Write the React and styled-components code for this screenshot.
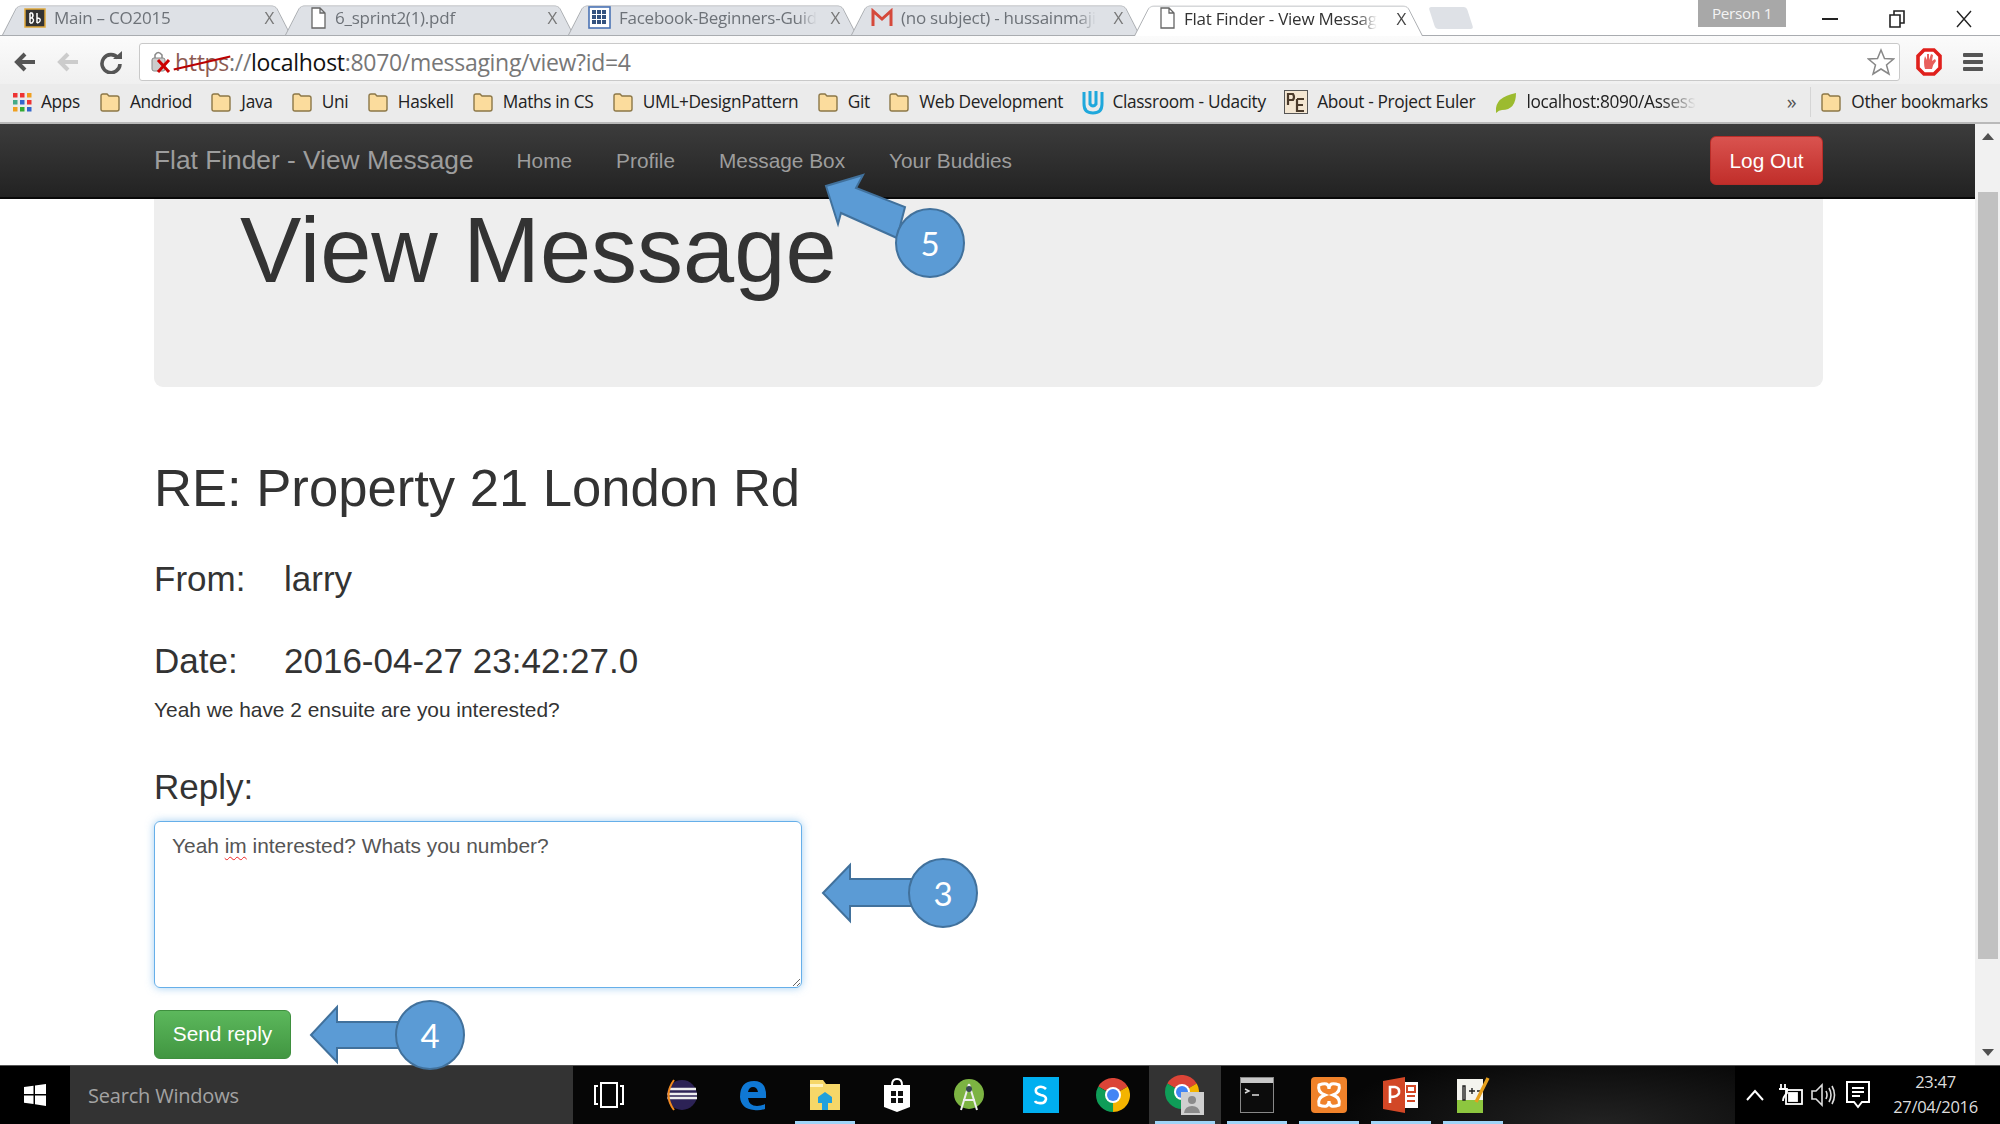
import React from 'react';
import styled, { createGlobalStyle } from 'styled-components';

const GlobalStyle = createGlobalStyle`
  html, body { margin: 0; padding: 0; background: #fff; }
  body { font-family: "Liberation Sans", Arial, sans-serif; overflow: hidden; }
  * { box-sizing: border-box; }
`;

const uiFont = '"Open Sans", "Noto Sans", sans-serif';

const Screen = styled.div`
  position: relative;
  width: 2000px;
  height: 1124px;
  display: flex;
  flex-direction: column;
  overflow: hidden;
`;

/* ---------- browser chrome ---------- */
const TabStrip = styled.div`
  height: 36px;
  flex: none;
  display: flex;
  align-items: stretch;
  padding-left: 5px;
  background: #fff;
  border-bottom: 1px solid #a9acb0;
`;
const Tab = styled.div`
  position: relative;
  width: 283px;
  height: ${p => (p.$active ? 36 : 35)}px;
  display: flex;
  align-items: center;
  gap: 8px;
  padding: 0 14px 0 ${p => p.$pad}px;
  z-index: ${p => (p.$active ? 2 : 1)};
  font: 17px ${uiFont};
  letter-spacing: -0.25px;
  color: ${p => (p.$active ? '#333' : '#6d7278')};
  &::before {
    content: "";
    position: absolute;
    inset: 1px -3px 0 -3px;
    z-index: -1;
    background: ${p => (p.$active ? '#fff' : '#dee1e6')};
    border: 1px solid #a9acb0;
    border-bottom: 0;
    border-radius: 5px 5px 0 0;
    transform: perspective(70px) rotateX(14deg);
    transform-origin: bottom;
  }
`;
const TabTitle = styled.span`
  white-space: nowrap;
  ${p => p.$fade && `
    -webkit-mask-image: linear-gradient(90deg, #000 90%, transparent);
    mask-image: linear-gradient(90deg, #000 90%, transparent);
  `}
`;
const TabClose = styled.span`
  margin-left: auto;
  flex: none;
  font: 17px ${uiFont};
  color: ${p => (p.$active ? '#444' : '#777')};
`;
const NewTab = styled.div`
  width: 38px;
  height: 22px;
  margin: 7px 0 0 12px;
  background: #dee1e6;
  border-radius: 3px;
  transform: skewX(18deg);
`;
const WindowArea = styled.div`
  margin-left: auto;
  display: flex;
  align-items: flex-start;
  padding-right: 3px;
`;
const PersonBadge = styled.div`
  width: 88px;
  height: 27px;
  margin-right: 10px;
  background: #a8a8a8;
  color: #f4f4f4;
  font: 15.3px/26px ${uiFont};
  letter-spacing: -0.3px;
  text-align: center;
`;
const WinButton = styled.div`
  width: 67px;
  height: 36px;
  display: flex;
  align-items: center;
  justify-content: center;
  margin-top: 1px;
`;
const Toolbar = styled.div`
  height: 48px;
  flex: none;
  display: flex;
  align-items: center;
  padding: 4px 12px 0 3px;
  background: linear-gradient(#fbfbfb, #f0f0f0);
`;
const NavIcon = styled.div`
  width: 43px;
  height: 30px;
  display: flex;
  align-items: center;
  justify-content: center;
`;
const AddressBar = styled.div`
  flex: 1;
  height: 38px;
  margin-left: 7px;
  display: flex;
  align-items: center;
  padding: 0 4px 0 9px;
  gap: 2px;
  background: #fff;
  border: 1px solid #c9c9c9;
  border-radius: 3px;
  font: 23px ${uiFont};
  letter-spacing: -0.3px;
  color: #777;
`;
const Url = styled.div`
  flex: 1;
  white-space: nowrap;
`;
const BadProtocol = styled.span`
  position: relative;
  color: #8c5a52;
  &::after {
    content: "";
    position: absolute;
    left: -2px;
    right: -2px;
    top: 50%;
    height: 2px;
    background: #b00;
    transform: rotate(-13deg);
  }
`;
const Host = styled.span`
  color: #111;
`;
const ToolButton = styled.div`
  width: ${p => p.$w}px;
  flex: none;
  display: flex;
  justify-content: center;
`;
const BookmarkBar = styled.div`
  height: 40px;
  flex: none;
  display: flex;
  align-items: center;
  padding: 0 12px 3px;
  background: #ebebeb;
  border-bottom: 2px solid #b9b9b9;
  font: 17.3px ${uiFont};
  letter-spacing: -0.35px;
  color: #222;
`;
const Bookmark = styled.div`
  display: flex;
  align-items: center;
  gap: ${p => p.$iconGap ?? 9}px;
  white-space: nowrap;
  margin-right: ${p => p.$gap ?? 18.4}px;
`;
const FadedMark = styled.span`
  -webkit-mask-image: linear-gradient(90deg, #000 80%, transparent);
  mask-image: linear-gradient(90deg, #000 80%, transparent);
`;
const Overflow = styled.div`
  margin-left: auto;
  padding-right: 14px;
  font-size: 20px;
  color: #555;
`;
const BarDivider = styled.div`
  width: 1px;
  height: 30px;
  margin-right: 9px;
  background: #d5d5d5;
`;

/* ---------- the page ---------- */
const Viewport = styled.div`
  flex: 1;
  min-height: 0;
  display: flex;
`;
const Page = styled.div`
  flex: 1;
  min-width: 0;
  overflow: hidden;
  background: #fff;
`;
const Navbar = styled.nav`
  height: 75px;
  display: flex;
  align-items: center;
  gap: 44px;
  padding: 0 152px 0 154px;
  background: linear-gradient(#3c3c3c, #222);
  border-bottom: 2px solid #080808;
  color: #9d9d9d;
  font-size: 20.8px;
`;
const Brand = styled.a`
  margin-right: -1px;
  font-size: 26.3px;
`;
const NavLink = styled.a``;
const LogOut = styled.button`
  margin-left: auto;
  width: 113px;
  height: 49px;
  padding: 0;
  border: 1px solid #b92c28;
  border-radius: 6px;
  background: linear-gradient(#d9534f, #c12e2a);
  color: #fff;
  font: 20.8px "Liberation Sans", Arial, sans-serif;
`;
const Container = styled.main`
  padding: 0 152px 0 154px;
  color: #333;
`;
const Jumbotron = styled.section`
  height: 188px;
  padding: 1px 86px 0;
  background: #eee;
  border-radius: 0 0 9px 9px;
`;
const PageTitle = styled.h1`
  margin: 0;
  font-size: 92px;
  font-weight: 400;
  line-height: 1.1;
`;
const Subject = styled.h2`
  margin: 72px 0 0;
  font-size: 52.6px;
  font-weight: 400;
  line-height: 58px;
`;
const MetaRow = styled.h3`
  display: flex;
  margin: ${p => p.$top}px 0 0;
  font-size: 35px;
  font-weight: 400;
  line-height: 38.5px;
`;
const MetaLabel = styled.span`
  width: 130px;
`;
const Body = styled.p`
  margin: 15px 0 0;
  font-size: 20.9px;
  line-height: 29px;
`;
const ReplyBox = styled.div`
  width: 648px;
  height: 167px;
  margin-top: 14px;
  padding: 9px 17px;
  border: 1.5px solid #66afe9;
  border-radius: 6px;
  box-shadow: 0 0 8px rgba(102, 175, 233, .6);
  color: #555;
  font-size: 20.9px;
  line-height: 29px;
  overflow: auto;
  resize: both;
`;
const Misspelt = styled.span`
  text-decoration: underline wavy #e22;
  text-decoration-thickness: 1px;
  text-underline-offset: 3px;
`;
const SendButton = styled.button`
  display: block;
  width: 137px;
  height: 49px;
  margin-top: 22px;
  padding: 0;
  border: 1px solid #3e8f3e;
  border-radius: 6px;
  background: linear-gradient(#5cb85c, #419641);
  color: #fff;
  font: 20.8px "Liberation Sans", Arial, sans-serif;
`;
const Scrollbar = styled.div`
  width: 25px;
  flex: none;
  display: flex;
  flex-direction: column;
  align-items: center;
  background: #f1f1f1;
`;
const ScrollArrow = styled.div`
  height: 25px;
  flex: none;
  display: flex;
  align-items: center;
`;
const ScrollThumb = styled.div`
  width: 20px;
  height: 767px;
  margin-top: 43px;
  background: #c1c1c1;
`;
const ScrollArrowEnd = styled(ScrollArrow)`
  margin-top: auto;
`;

/* ---------- taskbar ---------- */
const Taskbar = styled.footer`
  height: 59px;
  flex: none;
  display: flex;
  align-items: stretch;
  background: radial-gradient(ellipse 300px 90px at 1600px 60px, #232323, #060606 90%);
  border-top: 1px solid #555;
`;
const StartButton = styled.div`
  width: 70px;
  flex: none;
  display: flex;
  align-items: center;
  justify-content: center;
  background: #000;
`;
const SearchBox = styled.div`
  width: 503px;
  flex: none;
  display: flex;
  align-items: center;
  padding-left: 18px;
  background: #333;
  color: #a3a3a3;
  font: 20px ${uiFont};
  letter-spacing: -0.2px;
`;
const TaskSlot = styled.div`
  position: relative;
  width: 72px;
  display: flex;
  align-items: center;
  justify-content: center;
  background: ${p => (p.$focus ? '#333' : 'transparent')};
  &::after {
    content: "";
    display: ${p => (p.$running ? 'block' : 'none')};
    position: absolute;
    left: 6px;
    right: 6px;
    bottom: 0;
    height: 3px;
    background: #9fd4f7;
  }
`;
const Tray = styled.div`
  margin-left: auto;
  display: flex;
  align-items: center;
  gap: 8px;
  padding: 0 8px 0 10px;
  background: #000;
`;
const ChevronWrap = styled.div`
  display: flex;
  margin-right: 4px;
`;
const Clock = styled.div`
  width: 113px;
  padding-bottom: 3px;
  text-align: center;
  color: #ddd;
  font: 16.5px/25px ${uiFont};
  letter-spacing: -0.3px;
`;

/* callouts lie over the page */
const Overlay = styled.svg`
  position: absolute;
  inset: 0;
  pointer-events: none;
`;
const CalloutNumber = styled.text`
  font: 33px Lato, "Open Sans", sans-serif;
  fill: #fff;
  text-anchor: middle;
  dominant-baseline: central;
`;

/* ---------- icons ---------- */
const Folder = () => (
  <svg width="22" height="22" viewBox="0 0 22 22">
    <path d="M2 5 Q2 3 4 3 H8 L10 5 H18 Q20 5 20 7 V18 Q20 20 18 20 H4 Q2 20 2 18 Z" fill="#fbdc9d" stroke="#8c7747" strokeWidth="1.4" />
  </svg>
);
const PageIcon = () => (
  <svg width="18" height="22" viewBox="0 0 18 22" fill="#fff" stroke="#666" strokeWidth="1.3">
    <path d="M3 1 H11 L16 6 V21 H3 Z M11 1 V6 H16" />
  </svg>
);
const BbIcon = () => (
  <svg width="22" height="20" viewBox="0 0 22 20">
    <rect x="1" y="1" width="20" height="18" fill="#333" stroke="#e0a83a" strokeWidth="1.5" />
    <path d="M6 5 V15 M6 5 H8 Q10 7 8 10 H6 M8 10 Q11 12 8 15 H6 M13 5 V15 M13 10 Q17 10 16 13 Q15 15 13 15" fill="none" stroke="#fff" strokeWidth="1.5" />
  </svg>
);
const SheetIcon = () => (
  <svg width="23" height="23" viewBox="0 0 23 23">
    <rect x="1" y="1" width="21" height="21" fill="#fff" stroke="#4a73b5" strokeWidth="1.6" />
    {[4, 9, 14].map(x => [4, 9, 14].map(y => <rect key={`${x}${y}`} x={x} y={y} width="4" height="4" fill="#33527f" />))}
  </svg>
);
const GmailIcon = () => (
  <svg width="22" height="20" viewBox="0 0 22 20">
    <path d="M2 18 V3 L11 11 L20 3 V18" fill="none" stroke="#d5493b" strokeWidth="3" />
  </svg>
);
const Back = ({ color }) => (
  <svg width="24" height="22" viewBox="0 0 24 22">
    <path d="M22 11 H6 M12 3 L4 11 L12 19" fill="none" stroke={color} strokeWidth="4" />
  </svg>
);
const Reload = () => (
  <svg width="24" height="24" viewBox="0 0 24 24">
    <path d="M19 8 A9 9 0 1 0 21 14" fill="none" stroke="#555" strokeWidth="3.6" />
    <path d="M14 9 H23 V1 Z" fill="#555" />
  </svg>
);
const BrokenLock = () => (
  <svg width="24" height="26" viewBox="0 0 24 26">
    <rect x="3" y="9" width="13" height="13" rx="2" fill="#ccc" stroke="#888" />
    <path d="M6 9 V6 Q9 1 13 6 V9" fill="none" stroke="#888" strokeWidth="1.5" />
    <path d="M9 11 L20 23 M20 11 L9 23" stroke="#c00" strokeWidth="3" />
  </svg>
);
const Star = () => (
  <svg width="28" height="28" viewBox="0 0 28 28">
    <path d="M14 2 L17.5 10.5 L26.5 11 L19.5 17 L22 26 L14 21 L6 26 L8.5 17 L1.5 11 L10.5 10.5 Z" fill="#fff" stroke="#888" strokeWidth="1.5" />
  </svg>
);
const StopHand = () => (
  <svg width="26" height="28" viewBox="0 0 26 28">
    <path d="M8 2 H18 L24 8 V20 L18 26 H8 L2 20 V8 Z" fill="#fff" stroke="#e0201c" strokeWidth="3.6" />
    <path d="M9 21 Q7 14 9 8 L11 12 V6 H13 V12 L15 6 L17 7 L16 13 L19 11 L20 13 Q17 16 16 21 Z" fill="#e8605c" />
  </svg>
);
const Burger = () => (
  <svg width="20" height="20" viewBox="0 0 20 20" fill="#555">
    <rect y="1" width="20" height="4" rx="1" /><rect y="8" width="20" height="4" rx="1" /><rect y="15" width="20" height="4" rx="1" />
  </svg>
);
const AppsGrid = () => (
  <svg width="20" height="20" viewBox="0 0 20 20">
    {['#e33', '#e33', '#f0a020', '#4a8', '#36c', '#e33', '#f0a020', '#3a3', '#36c'].map((c, i) => (
      <rect key={i} x={1 + (i % 3) * 7} y={1 + Math.floor(i / 3) * 7} width="4.5" height="4.5" fill={c} />
    ))}
  </svg>
);
const UdacityIcon = () => (
  <svg width="24" height="28" viewBox="0 0 24 28">
    <path d="M3 4 V16 Q3 25 12 25 Q21 25 21 16 V4 M9 3 V16 Q12 20 15 16 V3" fill="none" stroke="#1fa8dc" strokeWidth="3" />
  </svg>
);
const EulerIcon = () => (
  <svg width="24" height="24" viewBox="0 0 24 24">
    <rect x=".5" y=".5" width="23" height="23" fill="#f3e6d2" stroke="#555" />
    <path d="M4 15 V4 H9 Q11 7 9 10 H4 M13 9 H20 M13 9 V21 H20 M13 15 H19" fill="none" stroke="#4a3a2a" strokeWidth="2.2" />
  </svg>
);
const LeafIcon = () => (
  <svg width="24" height="24" viewBox="0 0 24 24">
    <path d="M2 21 Q1 7 22 3 Q22 20 8 20 Q5 20 2 23 Z" fill="#9cbb2f" />
  </svg>
);
const WinLogo = () => (
  <svg width="24" height="24" viewBox="0 0 24 24" fill="#fff">
    <path d="M1 4 L10.5 2.7 V11 H1 Z M12 2.4 L23 1 V11 H12 Z M1 12.5 H10.5 V21 L1 19.8 Z M12 12.5 H23 V23 L12 21.3 Z" />
  </svg>
);
const TaskView = () => (
  <svg width="30" height="26" viewBox="0 0 30 26" fill="none" stroke="#fff" strokeWidth="2">
    <rect x="7" y="1" width="16" height="24" /><path d="M4 4 H1 V22 H4 M26 4 H29 V22 H26" />
  </svg>
);
const Eclipse = () => (
  <svg width="34" height="34" viewBox="0 0 34 34">
    <circle cx="18" cy="17" r="15" fill="#2c2255" />
    <path d="M5 11 H32 M3.5 16 H33 M3.5 20 H33" stroke="#eee" strokeWidth="2.5" />
    <path d="M10 2 Q-1 17 10 32" fill="none" stroke="#f28a1e" strokeWidth="2" />
  </svg>
);
const Edge = () => (
  <svg width="32" height="34" viewBox="0 0 32 34">
    <path d="M3 19 Q3 3 17 3 Q30 3 29 20 H11 Q12 28 20 28 Q25 28 28 26 V31 Q22 33 17 32 Q4 31 3 19 Z M11 14 H21 Q20 9 16 9 Q12 9 11 14 Z" fill="#0f78d4" fillRule="evenodd" />
  </svg>
);
const FilesIcon = () => (
  <svg width="32" height="34" viewBox="0 0 32 34">
    <path d="M1 2 H14 L17 6 H31 V32 H1 Z" fill="#f6d768" />
    <path d="M1 6 H14 V9 H1 Z" fill="#fff3c0" />
    <path d="M9 25 V19 L16 14 L23 19 V25 H19 V32 H13 V25 Z" fill="#21a0dc" />
  </svg>
);
const StoreIcon = () => (
  <svg width="30" height="36" viewBox="0 0 30 36">
    <path d="M10 8 Q10 2 15 2 Q20 2 20 8" fill="none" stroke="#fff" strokeWidth="2" />
    <path d="M2 8 H28 V30 L15 35 L2 30 Z" fill="#fff" />
    <path d="M9 14 H14 V19 H9 Z M16 14 H21 V19 H16 Z M9 21 H14 V26 H9 Z M16 21 H21 V26 H16 Z" fill="#111" />
  </svg>
);
const AndroidIcon = () => (
  <svg width="30" height="34" viewBox="0 0 30 34">
    <circle cx="15" cy="16" r="15" fill="#7cb342" />
    <path d="M15 6 L7 32 M15 6 L23 32 M9 22 H21" stroke="#eee" strokeWidth="2" fill="none" />
    <circle cx="15" cy="11" r="3" fill="#37474f" />
  </svg>
);
const SkypeIcon = () => (
  <svg width="36" height="36" viewBox="0 0 36 36">
    <rect width="36" height="36" fill="#00aff0" />
    <path d="M23 12 Q20 9 16 10 Q12 11 13 15 Q14 17 18 18 Q23 19 23 22 Q22 27 16 26 Q13 26 12 24" fill="none" stroke="#fff" strokeWidth="2.6" />
  </svg>
);
const ChromeLogo = ({ size = 34 }) => (
  <svg width={size} height={size} viewBox="0 0 34 34">
    {[['#db4437', -150], ['#f4b400', -30], ['#0f9d58', 90]].map(([c, r]) => (
      <circle key={c} cx="17" cy="17" r="12" fill="none" stroke={c} strokeWidth="10" pathLength="3" strokeDasharray="1 2" transform={`rotate(${r} 17 17)`} />
    ))}
    <circle cx="17" cy="17" r="8" fill="#fff" />
    <circle cx="17" cy="17" r="6" fill="#4285f4" />
  </svg>
);
const ChromeProfile = () => (
  <svg width="40" height="40" viewBox="0 0 40 40">
    <foreignObject width="34" height="34"><ChromeLogo /></foreignObject>
    <rect x="16" y="17" width="23" height="23" fill="#cfcfcf" />
    <circle cx="27" cy="25" r="4" fill="#8a8a8a" />
    <path d="M19 38 Q20 31 27 31 Q34 31 35 38 Z" fill="#8a8a8a" />
  </svg>
);
const Terminal = () => (
  <svg width="34" height="36" viewBox="0 0 34 36">
    <rect x=".5" y=".5" width="33" height="35" fill="#0c0c0c" stroke="#888" />
    <rect x="1" y="1" width="32" height="5" fill="#c8c8c8" />
    <path d="M5 12 L9 14 L5 16 M12 18 H19" stroke="#ddd" strokeWidth="1.4" fill="none" />
  </svg>
);
const Xampp = () => (
  <svg width="36" height="36" viewBox="0 0 36 36">
    <rect width="36" height="36" rx="4" fill="#f0822a" />
    <path d="M8 8 Q18 4 18 12 Q18 4 28 8 Q30 15 22 18 Q30 21 28 28 Q18 32 18 24 Q18 32 8 28 Q6 21 14 18 Q6 15 8 8 Z" fill="none" stroke="#fff" strokeWidth="3" />
  </svg>
);
const PowerPoint = () => (
  <svg width="36" height="38" viewBox="0 0 36 38">
    <rect x="17" y="6" width="18" height="26" fill="#fff" />
    <path d="M0 5 L22 1 V37 L0 33 Z" fill="#d24726" />
    <path d="M7 27 V11 H12 Q17 12 16 17 Q15 21 7 21" fill="none" stroke="#fff" strokeWidth="2.6" />
    <path d="M24 10 H32 V16 H24 Z M24 20 H32 M24 25 H32" fill="none" stroke="#d24726" strokeWidth="2" />
  </svg>
);
const NotepadPP = () => (
  <svg width="36" height="38" viewBox="0 0 36 38">
    <path d="M2 3 H28 V37 H2 Z" fill="#f4f4ee" />
    <path d="M2 24 H28 V37 H2 Z" fill="#8dc63f" />
    <path d="M8 10 H10 V24 H8 Z M14 15 H20 M17 12 V18 M22 15 H28" stroke="#222" strokeWidth="1.4" fill="none" />
    <path d="M33 2 L21 26" stroke="#e6a01e" strokeWidth="3.4" />
  </svg>
);
const Chevron = () => (
  <svg width="20" height="14" viewBox="0 0 20 14"><path d="M2 12 L10 3 L18 12" fill="none" stroke="#fff" strokeWidth="2" /></svg>
);
const Battery = () => (
  <svg width="26" height="24" viewBox="0 0 26 24" fill="none" stroke="#fff" strokeWidth="1.8">
    <rect x="9" y="7" width="16" height="14" /><rect x="12" y="10" width="8" height="8" fill="#fff" /><path d="M4 1 V6 M8 1 V6 M2 6 H10 V10 Q6 14 6 18" />
  </svg>
);
const Speaker = () => (
  <svg width="26" height="24" viewBox="0 0 26 24" fill="none" stroke="#ddd" strokeWidth="1.6">
    <path d="M1 8 H5 L11 2 V22 L5 16 H1 Z M15 8 Q17 12 15 16 M18 5 Q22 12 18 19 M21 3 Q26 12 21 21" />
  </svg>
);
const Notice = () => (
  <svg width="26" height="30" viewBox="0 0 26 30" fill="none" stroke="#fff" strokeWidth="2">
    <path d="M2 2 H24 V22 H17 L13 27 L9 22 H2 Z M7 8 H19 M7 12 H19 M7 16 H15" />
  </svg>
);

const tabs = [
  { icon: <BbIcon />, title: 'Main – CO2015', pad: 19 },
  { icon: <PageIcon />, title: '6_sprint2(1).pdf', pad: 21 },
  { icon: <SheetIcon />, title: 'Facebook-Beginners-Guid', pad: 17, fade: true },
  { icon: <GmailIcon />, title: '(no subject) - hussainmaji', pad: 17, fade: true },
  { icon: <PageIcon />, title: 'Flat Finder - View Messag', pad: 21, fade: true, active: true },
];
const bookmarks = ['Andriod', 'Java', 'Uni', 'Haskell', 'Maths in CS', 'UML+DesignPattern', 'Git', 'Web Development'];
const taskIcons = [
  { icon: <TaskView /> }, { icon: <Eclipse /> }, { icon: <Edge /> },
  { icon: <FilesIcon />, running: true }, { icon: <StoreIcon /> }, { icon: <AndroidIcon /> },
  { icon: <SkypeIcon /> }, { icon: <ChromeLogo /> },
  { icon: <ChromeProfile />, running: true, focus: true }, { icon: <Terminal />, running: true },
  { icon: <Xampp />, running: true }, { icon: <PowerPoint />, running: true }, { icon: <NotepadPP />, running: true },
];
const callouts = [
  { n: 5, cx: 930, cy: 243, points: '863,175 826,186 838,224 841,213 897,238 905,207 856,188' },
  { n: 3, cx: 943, cy: 893, points: '823,893 850,865 850,879 920,879 920,906 850,906 850,921' },
  { n: 4, cx: 430, cy: 1035, points: '311,1035 337,1007 337,1022 405,1022 405,1048 337,1048 337,1062' },
];

export default function App() {
  return (
    <Screen>
      <GlobalStyle />
      <TabStrip>
        {tabs.map(t => (
          <Tab key={t.title} $active={t.active} $pad={t.pad}>
            {t.icon}
            <TabTitle $fade={t.fade}>{t.title}</TabTitle>
            <TabClose $active={t.active}>X</TabClose>
          </Tab>
        ))}
        <NewTab />
        <WindowArea>
          <PersonBadge>Person 1</PersonBadge>
          <WinButton>
            <svg width="16" height="4"><rect y="1" width="16" height="2" fill="#222" /></svg>
          </WinButton>
          <WinButton>
            <svg width="16" height="18" fill="none" stroke="#222" strokeWidth="1.6"><path d="M1 5 H11 V17 H1 Z M5 5 V1 H15 V13 H11" /></svg>
          </WinButton>
          <WinButton>
            <svg width="16" height="18" stroke="#222" strokeWidth="1.4"><path d="M1 1 L15 17 M15 1 L1 17" /></svg>
          </WinButton>
        </WindowArea>
      </TabStrip>
      <Toolbar>
        <NavIcon><Back color="#555" /></NavIcon>
        <NavIcon><Back color="#ccc" /></NavIcon>
        <NavIcon><Reload /></NavIcon>
        <AddressBar>
          <BrokenLock />
          <Url>
            <BadProtocol>https</BadProtocol>://<Host>localhost</Host>:8070/messaging/view?id=4
          </Url>
          <Star />
        </AddressBar>
        <ToolButton $w={58}><StopHand /></ToolButton>
        <ToolButton $w={30}><Burger /></ToolButton>
      </Toolbar>
      <BookmarkBar>
        <Bookmark $gap={19}><AppsGrid />Apps</Bookmark>
        {bookmarks.map(name => <Bookmark key={name}><Folder />{name}</Bookmark>)}
        <Bookmark $iconGap={7}><UdacityIcon />Classroom - Udacity</Bookmark>
        <Bookmark><EulerIcon />About - Project Euler</Bookmark>
        <Bookmark $gap={0}><LeafIcon /><FadedMark>localhost:8090/Assess</FadedMark></Bookmark>
        <Overflow>»</Overflow>
        <BarDivider />
        <Bookmark $gap={0}><Folder />Other bookmarks</Bookmark>
      </BookmarkBar>
      <Viewport>
        <Page>
          <Navbar>
            <Brand>Flat Finder - View Message</Brand>
            <NavLink>Home</NavLink>
            <NavLink>Profile</NavLink>
            <NavLink>Message Box</NavLink>
            <NavLink>Your Buddies</NavLink>
            <LogOut>Log Out</LogOut>
          </Navbar>
          <Container>
            <Jumbotron><PageTitle>View Message</PageTitle></Jumbotron>
            <Subject>RE: Property 21 London Rd</Subject>
            <MetaRow $top={43}><MetaLabel>From:</MetaLabel>larry</MetaRow>
            <MetaRow $top={43}><MetaLabel>Date:</MetaLabel>2016-04-27 23:42:27.0</MetaRow>
            <Body>Yeah we have 2 ensuite are you interested?</Body>
            <MetaRow $top={44}>Reply:</MetaRow>
            <ReplyBox>Yeah <Misspelt>im</Misspelt> interested? Whats you number?</ReplyBox>
            <SendButton>Send reply</SendButton>
          </Container>
        </Page>
        <Scrollbar>
          <ScrollArrow>
            <svg width="12" height="7"><path d="M0 7 L6 0 L12 7 Z" fill="#505050" /></svg>
          </ScrollArrow>
          <ScrollThumb />
          <ScrollArrowEnd>
            <svg width="12" height="7"><path d="M0 0 L6 7 L12 0 Z" fill="#505050" /></svg>
          </ScrollArrowEnd>
        </Scrollbar>
      </Viewport>
      <Taskbar>
        <StartButton><WinLogo /></StartButton>
        <SearchBox>Search Windows</SearchBox>
        {taskIcons.map((t, i) => (
          <TaskSlot key={i} $running={t.running} $focus={t.focus}>{t.icon}</TaskSlot>
        ))}
        <Tray>
          <ChevronWrap><Chevron /></ChevronWrap>
          <Battery />
          <Speaker />
          <Notice />
          <Clock>23:47<br />27/04/2016</Clock>
        </Tray>
      </Taskbar>
      <Overlay width="2000" height="1124" viewBox="0 0 2000 1124">
        {callouts.map(c => (
          <g key={c.n}>
            <polygon points={c.points} fill="#5b9bd5" stroke="#41719c" strokeWidth="2" />
            <circle cx={c.cx} cy={c.cy} r="34" fill="#5b9bd5" stroke="#41719c" strokeWidth="2" />
            <CalloutNumber x={c.cx} y={c.cy}>{c.n}</CalloutNumber>
          </g>
        ))}
      </Overlay>
    </Screen>
  );
}
